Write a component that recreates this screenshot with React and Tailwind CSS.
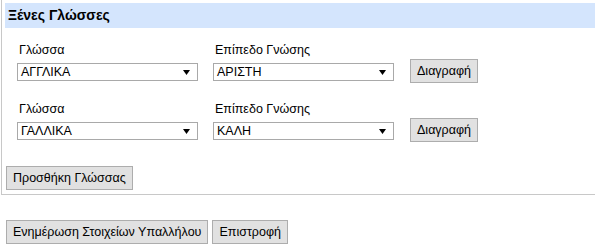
import React from 'react';

const font = { fontFamily: '"Liberation Sans", "DejaVu Sans", sans-serif' };

const Select = ({ value, width }) => (
    <div className={`relative h-[18px] ${width} border border-[#a9a9a9] bg-white flex items-center pl-[3px] text-[12.5px] text-black leading-none`}>
        <span>{value}</span>
        <svg className="absolute right-[7px] top-[6px]" width="7" height="5" viewBox="0 0 7 5">
            <polygon points="0,0 7,0 3.5,5" fill="#000" />
        </svg>
    </div>
);

const Button = ({ children, className = '' }) => (
    <button className={`h-[24px] px-[6px] border border-[#adadad] bg-[#e1e1e1] text-[12.5px] text-black leading-none ${className}`}>
        {children}
    </button>
);

const LanguageRow = ({ lang, level, className = '' }) => (
    <div className={`flex items-start pl-[12px] ${className}`}>
        <div className="w-[196px] flex flex-col">
            <div className="h-[16px] text-[12.5px] leading-[16px] text-black pl-[2px]">Γλώσσα</div>
            <div className="mt-[5px] flex">
                <Select value={lang} width="w-[181px]" />
            </div>
        </div>
        <div className="w-[197px] flex flex-col">
            <div className="h-[16px] text-[12.5px] leading-[16px] text-black pl-[2px]">Επίπεδο Γνώσης</div>
            <div className="mt-[5px] flex">
                <Select value={level} width="w-[181px]" />
            </div>
        </div>
        <div className="pt-[17px] flex">
            <Button>Διαγραφή</Button>
        </div>
    </div>
);

export default function App() {
    return (
        <div className="w-[595px] h-[252px] bg-white overflow-hidden" style={font}>
            <div className="ml-px border-l border-b border-[#c8c8c8] pl-[3px] pt-[3px] pb-[4px]">
                <div className="h-[25px] bg-[#d4e5fd] flex items-center pl-[3px] text-[14px] font-bold text-black">
                    Ξένες Γλώσσες
                </div>
                <LanguageRow lang="ΑΓΓΛΙΚΑ" level="ΑΡΙΣΤΗ" className="mt-[14px]" />
                <LanguageRow lang="ΓΑΛΛΙΚΑ" level="ΚΑΛΗ" className="mt-[18px]" />
                <div className="mt-[24px] pl-px flex">
                    <Button>Προσθήκη Γλώσσας</Button>
                </div>
            </div>
            <div className="mt-[25px] ml-[6px] flex gap-[4px]">
                <Button>Ενημέρωση Στοιχείων Υπαλλήλου</Button>
                <Button>Επιστροφή</Button>
            </div>
        </div>
    );
}
